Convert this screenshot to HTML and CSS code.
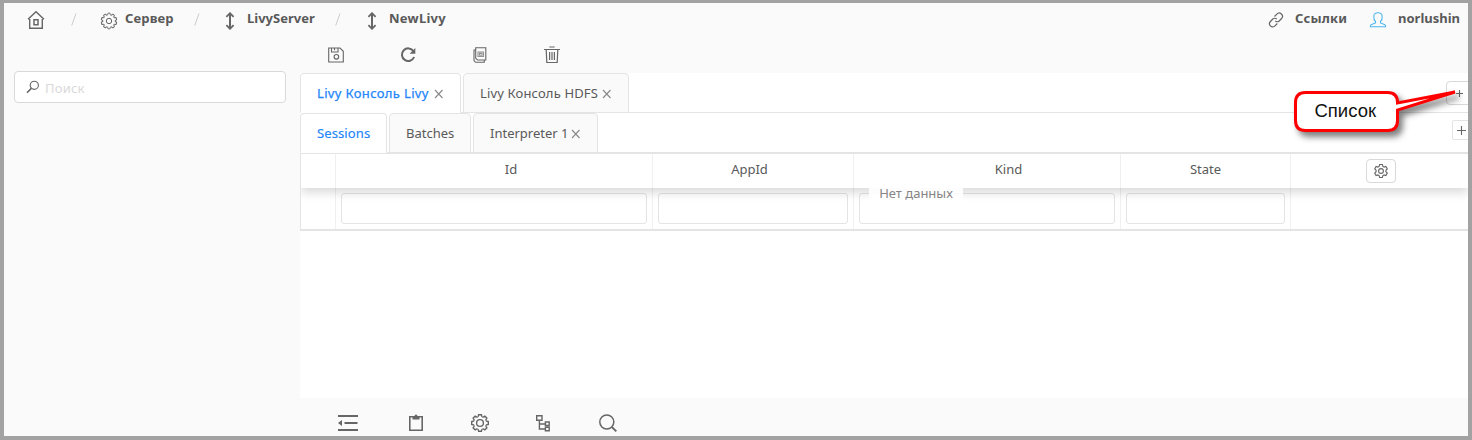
FILE: index.html
```html
<!DOCTYPE html>
<html lang="ru">
<head>
<meta charset="utf-8">
<title>NewLivy</title>
<link rel="stylesheet" href="styles.css">
</head>
<body>
<svg class="defs" width="0" height="0">
  <defs>
    <path id="tooth8" d="M-2.5-6.1Q-1.9-6.3-1.7-6.9L-1.4-8.3H1.4L1.7-6.9Q1.9-6.3 2.5-6.1"/>
    <path id="tooth10" d="M-1.9-5.9Q-1.3-6-1.3-6.5V-7.2Q-1.2-7.8-.6-7.8H.6Q1.2-7.8 1.3-7.2V-6.5Q1.3-6 1.9-5.9"/>
    <g id="gear8">
      <use href="#tooth8"/><use href="#tooth8" transform="rotate(45)"/><use href="#tooth8" transform="rotate(90)"/><use href="#tooth8" transform="rotate(135)"/>
      <use href="#tooth8" transform="rotate(180)"/><use href="#tooth8" transform="rotate(225)"/><use href="#tooth8" transform="rotate(270)"/><use href="#tooth8" transform="rotate(315)"/>
      <circle r="3.4"/>
    </g>
    <g id="gear10">
      <use href="#tooth10"/><use href="#tooth10" transform="rotate(36)"/><use href="#tooth10" transform="rotate(72)"/><use href="#tooth10" transform="rotate(108)"/><use href="#tooth10" transform="rotate(144)"/>
      <use href="#tooth10" transform="rotate(180)"/><use href="#tooth10" transform="rotate(216)"/><use href="#tooth10" transform="rotate(252)"/><use href="#tooth10" transform="rotate(288)"/><use href="#tooth10" transform="rotate(324)"/>
      <circle r="2.7"/>
    </g>
    <g id="updown"><path d="M6 2V16" stroke-width="2"/><path d="M2.4 4.8 6 1.2 9.6 4.8M2.4 13.2 6 16.8 9.6 13.2" stroke-width="1.8"/></g>
    <path id="cross" d="M1 1 8.5 9M8.5 1 1 9"/>
  </defs>
</svg>
<div class="frame">
  <header class="topbar">
    <svg class="icon home" width="18" height="20" viewBox="0 0 18 20"><path d="M1 9.2 9 1.7 17 9.2M2.7 9V18.2H15.3V9" stroke-width="1.4"/><path d="M7 9.8H11V14.8H7Z" stroke-width="1.5"/></svg>
    <svg class="icon slash first" width="6" height="13"><path d="M.7 12.5 5 .5"/></svg>
    <svg class="icon server" width="18" height="18" viewBox="-9 -9 18 18"><use href="#gear10"/></svg>
    <span class="crumb c1">Сервер</span>
    <svg class="icon slash" width="6" height="13"><path d="M.7 12.5 5 .5"/></svg>
    <svg class="icon arrow" width="12" height="18"><use href="#updown"/></svg>
    <span class="crumb c2">LivyServer</span>
    <svg class="icon slash" width="6" height="13"><path d="M.7 12.5 5 .5"/></svg>
    <svg class="icon arrow" width="12" height="18"><use href="#updown"/></svg>
    <span class="crumb c3">NewLivy</span>
    <span class="spacer"></span>
    <svg class="icon link" width="16" height="16" viewBox="0 0 16 16"><path d="M6.5 4.5 8.8 2.2A3 3 0 0 1 13.6 6.5L11.2 9A2.8 2.8 0 0 1 7.2 8.8M9.3 11.5 7 13.8A3 3 0 0 1 2.4 9.5L4.8 7A2.8 2.8 0 0 1 8.8 7.2" stroke-width="1.2"/></svg>
    <span class="crumb c4">Ссылки</span>
    <svg class="icon user" width="18" height="18" viewBox="0 0 18 18"><path d="M6.5 10.5C4.8 9 4.7 6.5 4.8 5 5 2.8 6.8 1.7 9 1.7S13 2.8 13.2 5C13.3 6.5 13.2 9 11.5 10.5V12L16 13.8Q16.7 14.4 16.6 15.8H1.4Q1.3 14.4 2 13.8L6.5 12Z"/></svg>
    <span class="crumb c5">norlushin</span>
  </header>
  <div class="body">
    <aside class="sidebar">
      <div class="search">
        <svg class="icon" width="14" height="14" viewBox="0 0 14 14"><circle cx="8.3" cy="5.3" r="4.1"/><path d="M5.3 8.4 1 12.7" stroke-width="1.5"/></svg>
        <span class="placeholder">Поиск</span>
      </div>
    </aside>
    <main class="main">
      <div class="toolbar">
        <svg class="icon" width="18" height="18" viewBox="0 0 18 18"><path d="M1.7 2H13L16.3 5.3V16H1.7ZM4.5 2.2V6H11V2.2M7.5 2.2V4.3"/><circle cx="9.4" cy="10.8" r="2.3"/></svg>
        <svg class="icon" width="18" height="18" viewBox="0 0 18 18"><path d="M14.5 5.2A6.3 6.3 0 1 0 15.1 11" stroke-width="2"/><path d="M16.3 2V7.7H10.6Z" class="solid"/></svg>
        <svg class="icon" width="18" height="18" viewBox="0 0 18 18"><path d="M4.7 1.7H14.8V14H6.5L4.7 12.3ZM4.7 4H3V14.5L4.5 16.3H13.3V14"/><path d="M7 6H12.5V10.5H7ZM8.5 7.4H11V9.2H8.5Z" opacity=".7"/></svg>
        <svg class="icon" width="18" height="20" viewBox="0 0 18 20"><path d="M1 4.5H17M6.3 2H11.7M3.2 4.8 3.8 17.5H14.2L14.8 4.8M6.6 7V15M9 7V15M11.4 7V15" stroke-width="1.2"/></svg>
      </div>
      <section class="content">
        <div class="tabs">
          <div class="tab active t1"><span>Livy Консоль Livy</span><svg class="icon x" width="10" height="10"><use href="#cross"/></svg></div>
          <div class="tab t2"><span>Livy Консоль HDFS</span><svg class="icon x" width="10" height="10"><use href="#cross"/></svg></div>
          <span class="spacer"></span>
          <button class="add"><svg class="icon" width="7" height="7"><path d="M0 3.5H7M3.5 0V7"/></svg></button>
        </div>
        <div class="tabs">
          <div class="tab active t3"><span>Sessions</span></div>
          <div class="tab t4"><span>Batches</span></div>
          <div class="tab t5"><span>Interpreter 1</span><svg class="icon x" width="10" height="10"><use href="#cross"/></svg></div>
          <span class="spacer"></span>
          <button class="add square"><svg class="icon" width="9" height="9"><path d="M0 4.5H9M4.5 0V9"/></svg></button>
        </div>
        <div class="table">
          <div class="row head">
            <div></div><div class="id">Id</div><div class="app">AppId</div><div class="kind">Kind</div><div>State</div>
            <div class="last"><button class="config"><svg class="icon" width="16" height="16" viewBox="-8 -8 16 16"><path d="M-1.4-6.5H1.4L1.9-4.6 3.1-3.9 4.9-4.5 6.3-2.1 4.9-.7V.7L6.3 2.1 4.9 4.5 3.1 3.9 1.9 4.6 1.4 6.5H-1.4L-1.9 4.6-3.1 3.9-4.9 4.5-6.3 2.1-4.9.7V-.7L-6.3-2.1-4.9-4.5-3.1-3.9-1.9-4.6Z"/><circle r="2.4"/></svg></button></div>
          </div>
          <div class="row filters">
            <div></div><div><i></i></div><div><i></i></div><div><i></i><span class="empty">Нет данных</span></div><div><i></i></div><div class="last"></div>
          </div>
        </div>
      </section>
      <footer class="bottombar">
        <svg class="icon" width="22" height="18" viewBox="0 0 22 18"><path d="M1 2H21M7.5 9H20.5M1 16H21" stroke-width="2"/><path d="M1 9 5 6V12Z" class="solid"/></svg>
        <svg class="icon b2" width="16" height="18" viewBox="0 0 16 18"><path d="M1.8 2.8H14.2V16.2H1.8Z" stroke-width="1.6"/><path d="M4.5 2.5H6.5Q6.5.5 8 .5T9.5 2.5H11.5V5.5H4.5Z" class="solid"/></svg>
        <svg class="icon b3" width="20" height="20" viewBox="-10 -10 20 20"><use href="#gear8" stroke-width="1.4"/></svg>
        <svg class="icon b4" width="16" height="18" viewBox="0 0 16 18"><path d="M1.7 1.7H7V6.3H1.7ZM4.4 6.3V15H10M4.4 10H10M10.4 8H14.2V11.5H10.4ZM10.4 13.3H14.2V16.8H10.4Z" stroke-width="1.4"/></svg>
        <svg class="icon b5" width="20" height="20" viewBox="0 0 20 20"><circle cx="8.8" cy="9" r="7" stroke-width="1.5"/><path d="M13.8 14 18.3 18.3" stroke-width="1.8"/></svg>
      </footer>
    </main>
  </div>
</div>
<svg class="callout" width="180" height="60" viewBox="1288 84 180 60"><path d="M1305.5 92.5H1387.5Q1397.5 92.5 1397.5 102.5V103L1455 92 1397.5 110V120.5Q1397.5 130.5 1387.5 130.5H1305.5Q1295.5 130.5 1295.5 120.5V102.5Q1295.5 92.5 1305.5 92.5Z"/><text x="1314.5" y="117" textLength="61.5" lengthAdjust="spacingAndGlyphs">Список</text></svg>
</body>
</html>
```
FILE: styles.css
```css
* { box-sizing: border-box; }
body { margin: 0; background: #a3a2a2; font-family: "Noto Sans", sans-serif; font-size: 13px; color: #595959; overflow: hidden; }
.defs { position: absolute; }
.frame { width: 1472px; height: 440px; border: 4px solid #a3a2a2; border-top-width: 3px; background: #fafafa; display: flex; flex-direction: column; overflow: hidden; }
.icon { fill: none; stroke: #666; stroke-width: 1.1; flex: none; display: block; }
.icon .solid { fill: #666; stroke: none; }
.spacer { flex: 1; }

.topbar { height: 34px; display: flex; align-items: center; padding: 0 0 2px 23px; flex: none; }
.crumb { font-weight: 700; line-height: 20px; white-space: nowrap; flex: none; padding-bottom: 2px; }
.home { margin-top: 2px; }
.slash { stroke: #cbcbcb; stroke-width: 1; margin-right: 24px; }
.slash.first { margin: 0 23px 0 26px; }
.server { margin: 3px 7px 0 0; stroke-width: 1; }
.arrow { margin: 3px 11px 0 0; }
.c1 { width: 69px; letter-spacing: .15px; }
.c2 { width: 88px; }
.c3 { width: 70px; letter-spacing: .25px; }
.c2 + .slash { margin-right: 25px; }
.link { margin: 1px 11px 0 0; }
.c4 { width: 74px; letter-spacing: .15px; }
.user { stroke: #4fb5ee; margin: 2px 11px 0 0; }
.c5 { width: 70px; }

.body { flex: 1; display: grid; grid-template-columns: 296px 1fr; min-height: 0; }
.sidebar { padding: 34px 14px 0 10px; }
.search { height: 32px; border: 1px solid #d9d9d9; border-radius: 4px; background: #fff; display: flex; align-items: center; padding-left: 11px; }
.placeholder { color: #d9d9d9; margin-left: 5px; padding-top: 2px; letter-spacing: .2px; }
.main { display: flex; flex-direction: column; min-width: 0; }
.toolbar { height: 36px; display: flex; align-items: center; gap: 54px; padding-left: 27px; flex: none; }
.content { background: #fff; height: 325px; flex: none; }
.tabs { height: 40px; display: flex; border-bottom: 1px solid #e4e4e4; }
.tab { height: 40px; border: 1px solid #e4e4e4; border-radius: 4px 4px 0 0; background: #fafafa; display: flex; align-items: center; padding: 0 0 0 16px; margin-right: 2px; white-space: nowrap; flex: none; }
.tab.active { background: #fff; color: #2386fa; border-bottom-color: #fff; }
.tab .x { margin: 2px 0 0 4px; stroke: #888; stroke-width: 1.1; }
.t1 { width: 161px; }
.t2 { width: 166px; }
.t3 { width: 87px; }
.t4 { width: 82px; }
.t5 { width: 125px; }
.t1 span { width: 113px; letter-spacing: .35px; -webkit-text-stroke: .25px; }
.t2 span { width: 118px; letter-spacing: .15px; }
.t3 span { letter-spacing: .1px; -webkit-text-stroke: .15px; }
.t5 span { width: 77px; }
.add { width: 32px; height: 24px; margin: 8px -10px 0 0; border: 1px solid #d9d9d9; border-radius: 4px; background: #fff; padding: 0 0 0 9px; }
.add.square { width: 26px; height: 20px; margin: 7px -10px 0 0; padding-left: 4px; border-color: #e4e4e4; border-radius: 2px; }
.table { border-left: 1px solid #e4e4e4; border-bottom: 2px solid #e4e4e4; }
.row { display: grid; grid-template-columns: 35px 317px 201px 267px 170px 1fr; }
.row > div { border-right: 1px solid #f0f0f0; }
.row > .last { border-right: 0; }
.head { height: 35px; border-top: 1px solid #e4e4e4; text-align: center; line-height: 31px; box-shadow: 0 5px 9px rgba(0,0,0,.14); clip-path: inset(0 0 -20px 0); position: relative; z-index: 1; background: #fff; }
.head .id { padding-left: 34px; }
.head .app { padding-right: 7px; }
.head .kind { padding-left: 43px; }
.config { width: 30px; height: 24px; border: 1px solid #d9d9d9; border-radius: 4px; background: #fff; display: flex; align-items: center; justify-content: center; padding: 0; margin: 5px auto 0; }
.head .last { padding-left: 3px; }
.filters { height: 41px; }
.filters > div { padding: 5px 5px 0; position: relative; }
.filters i { display: block; height: 31px; border: 1px solid #e4e4e4; border-radius: 3px; background: #fff; }
.empty { position: absolute; z-index: 2; left: 15px; top: 0; width: 94px; height: 17px; background: rgba(255,255,255,.9); text-align: center; color: #858585; line-height: 10px; white-space: nowrap; }
.bottombar { flex: 1; display: flex; align-items: center; padding: 11px 0 0 37px; }
.b2 { margin-left: 49px; }
.b3 { margin-left: 46px; }
.b4 { margin-left: 45px; }
.b5 { margin-left: 47px; }
.callout { position: absolute; left: 1288px; top: 84px; overflow: visible; }
.callout path { fill: #fff; stroke: #f00; stroke-width: 3; filter: drop-shadow(4px 5px 3px rgba(0,0,0,.5)); }
.callout text { font-family: "Liberation Sans", Arial, sans-serif; font-size: 18px; fill: #111; }
```
